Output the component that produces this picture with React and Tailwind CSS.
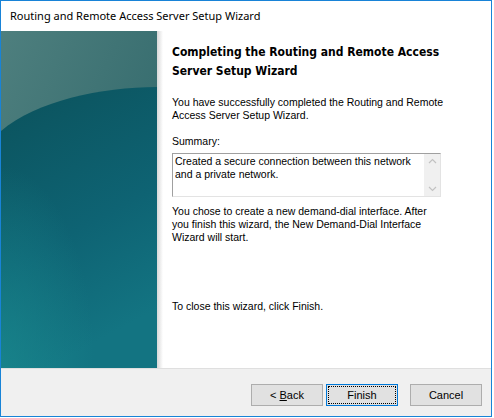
import React from "react";

const PanelArt = () => (
  <svg className="absolute inset-0 h-full w-full" viewBox="0 0 156 337" preserveAspectRatio="none">
    <defs>
      <linearGradient id="top" x1="0" y1="0" x2="1" y2="1">
        <stop offset="0" stopColor="#4e7f7e" />
        <stop offset="1" stopColor="#2a6367" />
      </linearGradient>
      <linearGradient id="body" x1="0" y1="0" x2="0.3" y2="1">
        <stop offset="0" stopColor="#0b525c" />
        <stop offset="0.6" stopColor="#0e6373" />
        <stop offset="1" stopColor="#137482" />
      </linearGradient>
      <radialGradient id="glow" cx="0" cy="1" r="0.6">
        <stop offset="0" stopColor="#1a8a8f" stopOpacity="0.7" />
        <stop offset="1" stopColor="#1a8a8f" stopOpacity="0" />
      </radialGradient>
    </defs>
    <rect width="156" height="337" fill="url(#top)" />
    <path d="M0 100 C 35 70, 100 56, 156 56 L156 337 L0 337 Z" fill="url(#body)" />
    <rect width="156" height="337" fill="url(#glow)" />
  </svg>
);

const Btn = ({ children, focused }) => (
  <button
    className={
      focused
        ? "w-[72px] h-[22px] border border-[#0078d7] bg-[#e1e1e1] p-[1px]"
        : "w-[72px] h-[22px] border border-[#adadad] bg-[#e1e1e1]"
    }
  >
    {focused ? (
      <span className="flex h-full w-full items-center justify-center border border-dotted border-black">{children}</span>
    ) : (
      children
    )}
  </button>
);

export default function App() {
  return (
    <div className="h-[418px] w-[494px] bg-white" style={{ fontFamily: "'Liberation Sans', Arial, sans-serif" }}>
      <div className="flex h-[417px] w-[492px] flex-col border border-[#1883d7] bg-white">
        {/* title bar */}
        <div className="flex h-[30px] items-center pl-[9px] text-[11px] text-black" style={{ fontFamily: "'Noto Sans', sans-serif" }}>
          Routing and Remote Access Server Setup Wizard
        </div>

        <div className="flex h-[337px]">
          <div className="relative w-[156px] overflow-hidden">
            <PanelArt />
          </div>
          <div className="w-[6px] bg-gradient-to-r from-[#d8d8d8] to-white" />
          <div className="flex-1 pl-[9px] pt-[12px] text-[10.5px] leading-[13px] text-black">
            <h1
              className="whitespace-nowrap text-[12px] font-bold leading-[19px]"
              style={{ fontFamily: "'DejaVu Sans Condensed', 'DejaVu Sans', Verdana, sans-serif" }}
            >
              Completing the Routing and Remote Access
              <br />
              Server Setup Wizard
            </h1>
            <p className="mt-[15px] whitespace-nowrap">
              You have successfully completed the Routing and Remote
              <br />
              Access Server Setup Wizard.
            </p>
            <p className="mt-[13px]">Summary:</p>
            <div className="mt-[5px] flex h-[44px] w-[269px] border border-t-[#a0a0a0] border-l-[#a0a0a0] border-r-[#e3e3e3] border-b-[#e3e3e3]">
              <div className="flex-1 whitespace-nowrap pl-[2px] pt-[1px]">
                Created a secure connection between this network
                <br />
                and a private network.
              </div>
              <div className="flex w-[16px] flex-col items-center justify-between bg-[#f0f0f0] py-[4px]">
                <svg width="9" height="6" viewBox="0 0 9 6">
                  <path d="M1 5 L4.5 1.5 L8 5" fill="none" stroke="#c2c2c2" strokeWidth="1.2" />
                </svg>
                <svg width="9" height="6" viewBox="0 0 9 6">
                  <path d="M1 1 L4.5 4.5 L8 1" fill="none" stroke="#c2c2c2" strokeWidth="1.2" />
                </svg>
              </div>
            </div>
            <p className="mt-[8px] whitespace-nowrap">
              You chose to create a new demand-dial interface. After
              <br />
              you finish this wizard, the New Demand-Dial Interface
              <br />
              Wizard will start.
            </p>
            <p className="mt-[56px]">To close this wizard, click Finish.</p>
          </div>
        </div>

        <div className="flex flex-1 items-start justify-end gap-[3px] border-t border-[#dfdfdf] bg-[#f0f0f0] pr-[9px] pt-[15px] text-[11px] text-black">
          <Btn>
            &lt; <span className="underline">B</span>ack
          </Btn>
          <Btn focused>Finish</Btn>
          <div className="w-[6px]" />
          <Btn>Cancel</Btn>
        </div>
      </div>
    </div>
  );
}
